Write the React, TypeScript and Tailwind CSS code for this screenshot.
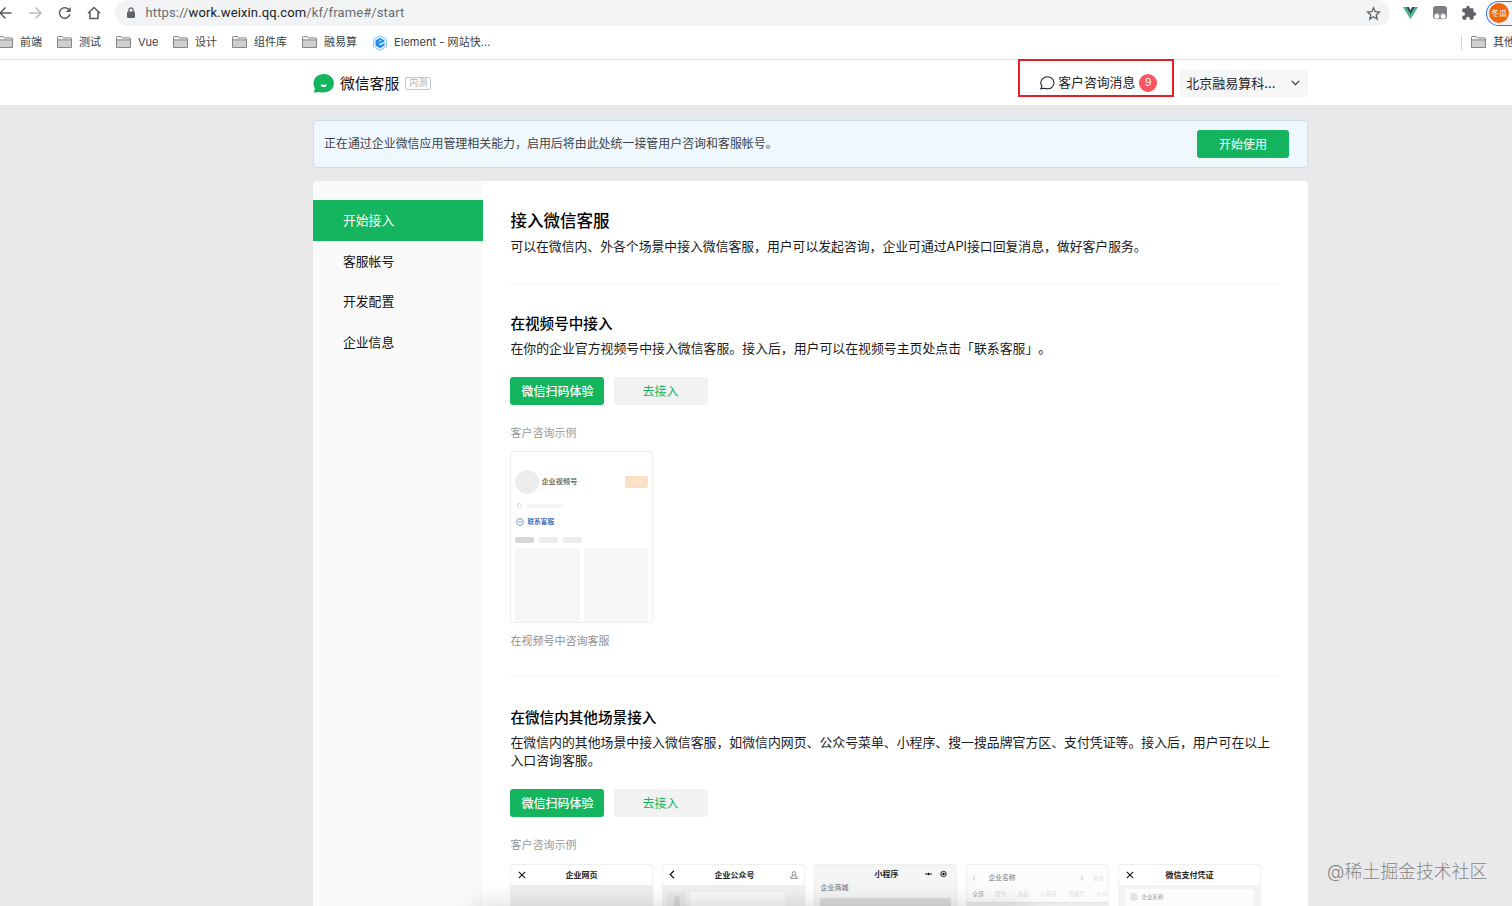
import type { ReactNode } from "react";
import clsx from "clsx";

const NAV_ITEMS = ["开始接入", "客服帐号", "开发配置", "企业信息"];

const BOOKMARKS = [
  { label: "前端", width: "w-[58px]" },
  { label: "测试", width: "w-[59px]" },
  { label: "Vue", width: "w-[57px]" },
  { label: "设计", width: "w-[59px]" },
  { label: "组件库", width: "w-[70px]" },
  { label: "融易算", width: "w-[70px]" },
];

function FolderIcon() {
  return (
    <svg className="-mt-px h-3 w-[15px] shrink-0" viewBox="0 0 15 12" fill="none" stroke="#77787a" strokeWidth=".9">
      <path d="M.5 11.500V1.300q0-.8.8-.8h3.900l1.200 1.400h7.300q.8 0 .8.800v8.800z" fill="#f3f3f3" />
      <path d="M1 4.200h13v6.800H1z" fill="#cfcfcf" stroke="none" />
      <path d="M.5 3.900h14" />
    </svg>
  );
}

function Toolbar() {
  return (
    <div className="flex h-[26px] items-center">
      <div className="flex w-[115px] shrink-0 items-center">
        <svg className="h-4 w-[115px]" viewBox="0 0 115 16" fill="none" stroke="#5a5d61" strokeWidth="1.5">
          <path d="M11.500 8H.5M5.500 2.500L0 8l5.500 5.500" />
          <path d="M29 8h11.500M35.500 2.500L41 8l-5.500 5.500" stroke="#b9bbbd" />
          <path d="M69.300 5.200A5.300 5.300 0 1 0 69.900 9.300" />
          <path d="M70.700 2v5h-5z" fill="#5a5d61" stroke="none" />
          <path d="M88 8.300l6-5.800 6 5.800M90 7.300v6.200h8V7.300" />
        </svg>
      </div>
      <div className="flex h-[26px] w-[1275px] shrink-0 items-center rounded-full bg-[#f1f3f4] pr-[9px] pl-3">
        <svg className="h-3 w-2" viewBox="0 0 8 12">
          <rect y="4.500" width="8" height="6.500" rx="1" fill="#5f6368" />
          <path d="M1.900 5V3a2.100 2.100 0 0 1 4.200 0v2" fill="none" stroke="#5f6368" strokeWidth="1.200" />
        </svg>
        <div className="ml-[10.500px] flex-1 font-[Roboto,sans-serif] text-[13px] tracking-[0.120px] text-[#6a6d71]">
          https://<span className="text-[#202124]">work.weixin.qq.com</span>/kf/frame#/start
        </div>
        <svg className="size-[15px]" viewBox="0 0 15 15" fill="none" stroke="#5f6368" strokeWidth="1.300">
          <path d="M7.500 1.800l1.700 3.900 4.200.4-3.200 2.800 1 4.200-3.700-2.300-3.700 2.300 1-4.200L1.600 6.100l4.200-.4z" />
        </svg>
      </div>
      <svg className="ml-[13px] h-3 w-[15px] shrink-0" viewBox="0 0 15 12">
        <path d="M0 0h3l4.500 7.500L12 0h3L7.500 12z" fill="#41b883" />
        <path d="M3 0h2.800l1.700 3 1.700-3H12L7.500 7.500z" fill="#34495e" />
      </svg>
      <svg className="ml-[15px] size-[14px] shrink-0" viewBox="0 0 14 14">
        <rect width="14" height="13" rx="3" fill="#7c7e81" />
        <circle cx="3.800" cy="10.300" r="2.800" fill="#fff" stroke="#8a8c8f" strokeWidth=".6" />
        <circle cx="10.200" cy="10.300" r="2.800" fill="#fff" stroke="#8a8c8f" strokeWidth=".6" />
      </svg>
      <svg className="ml-[14px] size-[16px] shrink-0" viewBox="0 0 24 24" fill="#5f6368">
        <path d="M20.500 11H19V7c0-1.100-.9-2-2-2h-4V3.500a2.500 2.500 0 0 0-5 0V5H4c-1.100 0-2 .9-2 2v3.800h1.500a2.700 2.700 0 0 1 0 5.400H2V20c0 1.100.9 2 2 2h3.800v-1.500a2.700 2.700 0 0 1 5.400 0V22H17c1.100 0 2-.9 2-2v-4h1.500a2.500 2.500 0 0 0 0-5z" />
      </svg>
      <div className="ml-[9px] flex h-[25px] w-10 shrink-0 items-center rounded-l-full border-[1.500px] border-r-0 border-[#3f76c8] bg-[#eef3fc] pl-[2px]">
        <div className="flex size-5 items-center justify-center rounded-full bg-[#ec6a0c] text-[8px] text-white">冬瓜</div>
      </div>
    </div>
  );
}

function BookmarkBar() {
  return (
    <div className="flex h-[34px] items-center border-b border-[#dcdddf] text-[11px] text-[#3c4043]">
      <div className="-ml-[2px] flex">
        {BOOKMARKS.map((b, i) => (
          <div key={b.label} className={clsx("flex shrink-0 items-center gap-[7px]", i > 0 && "pl-px", b.width)}>
            <FolderIcon />
            <span className="whitespace-nowrap">{b.label}</span>
          </div>
        ))}
      </div>
      <svg className="ml-[2px] h-4 w-[14px] shrink-0" viewBox="0 0 14 16">
        <path d="M7 .6l6.400 3.700v7.400L7 15.400.6 11.700V4.300z" fill="#eaf5ff" stroke="#6bb7fb" strokeWidth=".8" />
        <path d="M7 2.800l4.500 2.600v1.200L7 9.200v1.400l4.500-2.600v2.600L7 13.200l-4.500-2.600V5.400z" fill="#1e8cf5" />
        <path d="M5.500 6.500L9 4.800M5.500 9.500L9 7.800" stroke="#fff" strokeWidth=".7" />
      </svg>
      <span className="ml-[7px] flex-1 tracking-[0.050px]">Element - 网站快...</span>
      <div className="flex h-[15px] w-[51px] items-center gap-[7px] overflow-hidden border-l border-[#d5d6d8] pl-[9px] whitespace-nowrap">
        <FolderIcon />
        其他
      </div>
    </div>
  );
}

function AppHeader() {
  return (
    <header className="flex h-[45px] items-center bg-white pl-[313px]">
      <svg className="mt-px h-[19px] w-[21px]" viewBox="0 0 21 19">
        <path d="M10.700 0C4.900 0 .5 3.900.5 9c0 2.600.8 4.400 1.300 5.500.3 1-.4 2.500-1.500 3.800 2.600.4 4.300-.1 5-.4 1.500.5 3.300.7 5.400.7 6 0 10.200-4 10.200-9.300S16.700 0 10.700 0z" fill="#15b55f" />
        <path d="M7.500 10.200q3.200 1 6.400 0c-.3 1.900-1.600 2.900-3.200 2.900s-2.900-1-3.200-2.900z" fill="#fff" />
      </svg>
      <span className="mt-[3px] ml-[6px] text-[14.800px] text-[#111]">微信客服</span>
      <span className="mt-px ml-[6px] flex h-[13px] w-[26px] items-center justify-center rounded-[2px] border border-[#c6c6c6] text-[9px] text-[#b0b0b0]">
        内测
      </span>
      <div className="-mt-[9px] ml-[587px] flex h-[38px] w-[156px] items-center border-2 border-[#e01f26] pt-[11px] pb-px pl-[19px]">
        <svg className="size-4" viewBox="0 0 16 16" fill="none" stroke="#222" strokeWidth="1.100">
          <path d="M8.500 1.800c3.800 0 6.500 2.700 6.500 6s-2.700 6-6.500 6c-1 0-2-.2-2.800-.5l-3.900.6 1.200-2.600C2.300 10.300 1.700 9.200 1.700 7.800c0-3.300 3-6 6.800-6z" />
        </svg>
        <span className="ml-[3px] text-[12.850px] text-[#222]">客户咨询消息</span>
        <span className="ml-1 flex size-[18px] items-center justify-center rounded-full bg-[#fa5560] font-['Liberation_Sans',sans-serif] text-[11.500px] text-white">
          9
        </span>
      </div>
      <div className="mt-px ml-[6px] flex h-[27px] w-[128px] items-center justify-between rounded-[3px] bg-[#f6f6f6] pr-2 pl-[6px] text-[13px] text-[#222]">
        <span className="pt-px">北京融易算科...</span>
        <svg className="h-[6px] w-[9px]" viewBox="0 0 9 6" fill="none" stroke="#333" strokeWidth="1.200">
          <path d="M.7.800l3.800 3.800L8.300.800" />
        </svg>
      </div>
    </header>
  );
}

function Sidebar() {
  return (
    <nav className="w-[170px] shrink-0 bg-[#fafafa] pt-[19px] text-[12.800px]">
      {NAV_ITEMS.map((item, i) => (
        <div
          key={item}
          className={clsx("flex h-[40.600px] items-center pl-[30px]", i === 0 ? "bg-[#15b55f] text-white" : "pt-px text-[#111]")}
        >
          {item}
        </div>
      ))}
    </nav>
  );
}

function Actions() {
  return (
    <div className="flex gap-[10px] text-[12px]">
      <button className="h-[28px] w-[94px] rounded-[3px] bg-[#15b55f] pt-[2px] font-medium text-white">微信扫码体验</button>
      <button className="h-[28px] w-[94px] rounded-[3px] bg-[#f2f2f2] pt-[2px] pr-[2px] text-[#15b55f]">去接入</button>
    </div>
  );
}

function ChannelPreview() {
  return (
    <div className="mt-[9px] flex h-[172px] w-[143px] flex-col rounded-[3px] border border-[#efefef] px-1 pt-[18px] shadow-[0_0_2px_#00000008]">
      <div className="flex h-6 items-center">
        <div className="size-6 rounded-full bg-[#ededed]" />
        <span className="ml-[2px] flex-1 pt-px text-[7.200px] font-medium text-[#555]">企业视频号</span>
        <span className="flex h-3 w-[23px] items-center justify-center rounded-[2px] bg-[#fbdfc2] text-[5px] text-[#fff3e6]">关注</span>
      </div>
      <div className="mt-[9px] flex h-[6px] items-center gap-1 pl-[2px]">
        <span className="size-[5px] rounded-full border border-[#d5d5d5]" />
        <span className="h-1 w-[38px] rounded-full bg-[#f5f5f5]" />
      </div>
      <div className="mt-[8px] flex h-[10px] items-center gap-[3px] pl-[1px] text-[6.700px] font-bold text-[#4674bd]">
        <svg className="size-2" viewBox="0 0 8 8" fill="none" stroke="#5b84c4" strokeWidth=".8">
          <circle cx="4" cy="4" r="3.400" />
          <path d="M2.200 4h3.600" />
        </svg>
        联系客服
      </div>
      <div className="mt-[10px] flex gap-[5px]">
        <span className="h-[6px] w-[19px] rounded-[2px] bg-[#d6d8d8]" />
        <span className="h-[6px] w-[19px] rounded-[2px] bg-[#ededed]" />
        <span className="h-[6px] w-[19px] rounded-[2px] bg-[#ededed]" />
      </div>
      <div className="mt-[5px] flex flex-1 gap-1">
        <div className="flex-1 bg-[#f6f6f6]" />
        <div className="flex-1 bg-[#f6f6f6]" />
      </div>
    </div>
  );
}

function Phone({ className, children }: { className?: string; children: ReactNode }) {
  return (
    <div className={clsx("h-[172px] w-[143px] shrink-0 overflow-hidden rounded-[3px] border border-[#efefef] text-[8px] text-[#222]", className)}>
      {children}
    </div>
  );
}

function CloseIcon() {
  return (
    <svg className="size-2" viewBox="0 0 8 8" stroke="#111" strokeWidth="1.100">
      <path d="M.8.800l6.400 6.400M7.200.800L.8 7.200" />
    </svg>
  );
}

function ScenePreviews() {
  return (
    <div className="mt-[10px] flex gap-[9px]">
      <Phone className="bg-[#efefef]">
        <div className="flex h-5 items-center bg-white pl-[7px]">
          <CloseIcon />
          <span className="ml-[39px] font-bold">企业网页</span>
        </div>
      </Phone>
      <Phone className="bg-[#f1f1f1]">
        <div className="flex h-5 items-center bg-white pr-[6px] pl-[6px]">
          <svg className="h-[9px] w-[6px]" viewBox="0 0 6 9" fill="none" stroke="#111" strokeWidth="1.200">
            <path d="M5 .8L1.200 4.500 5 8.200" />
          </svg>
          <span className="ml-[39px] flex-1 font-bold">企业公众号</span>
          <svg className="size-2" viewBox="0 0 8 8" fill="none" stroke="#777" strokeWidth=".8">
            <circle cx="4" cy="2.400" r="1.800" />
            <path d="M3 4.200v.8L.6 6.200v1.200h6.800V6.200L5 5v-.8" />
          </svg>
        </div>
        <div className="flex gap-1 pt-[7px] pl-1">
          <div className="flex h-4 w-[19px] justify-center bg-[#e9e9e9] pt-1">
            <span className="h-3 w-[6px] rounded-full bg-[#d8d8d8]" />
          </div>
          <div className="h-8 w-[95px] bg-[#f9f9f9]" />
        </div>
      </Phone>
      <Phone className="bg-[#f5f5f5]">
        <div className="flex h-[19px] items-center pr-[9px] pl-[59px]">
          <span className="flex-1 font-bold">小程序</span>
          <svg className="h-2 w-[22px]" viewBox="0 0 22 8">
            <circle cx="1" cy="4" r=".8" />
            <circle cx="3.500" cy="4" r="1.200" />
            <circle cx="6" cy="4" r=".8" />
            <circle cx="18.500" cy="4" r="2.700" fill="none" stroke="#222" />
            <circle cx="18.500" cy="4" r="1.200" />
          </svg>
        </div>
        <div className="pl-[5px] text-[7px] leading-[8px] text-[#666]">企业商城</div>
        <div className="mx-[5px] mt-[6px] h-20 rounded-[2px] bg-[#dcdcdc]" />
      </Phone>
      <Phone className="bg-[#fcfcfc]">
        <div className="flex h-[26px] items-center pr-[5px] pl-[5px] text-[#c9c9c9]">
          <svg className="h-[6px] w-1" viewBox="0 0 4 6" fill="none" stroke="#bbb" strokeWidth=".8">
            <path d="M3.500.4L.8 3l2.700 2.600" />
          </svg>
          <span className="ml-3 flex-1 text-[6.800px] text-[#777]">企业名称</span>
          <svg className="mr-[9px] h-[6px] w-1" viewBox="0 0 4 6" fill="none" stroke="#ccc" strokeWidth=".8">
            <path d="M2 0v5M.4 3.500L2 5.200l1.600-1.700" />
          </svg>
          <span className="text-[5px] text-[#ddd]">取消</span>
        </div>
        <div className="flex h-[11px] items-start justify-between pr-[1px] pl-[5px] text-[5.500px] leading-[6px] text-[#dcdcdc]">
          <span className="text-[#999]">全部</span>
          <span>服务</span>
          <span>商品</span>
          <span>小程序</span>
          <span>视频号</span>
          <span>公众</span>
        </div>
        <div className="h-20 border-t border-[#e2e2e2] bg-[#ededed] px-1 pt-1">
          <div className="h-10 bg-[#f7f7f7]" />
        </div>
      </Phone>
      <Phone className="bg-[#f3f3f3]">
        <div className="flex h-5 items-center bg-white pl-[7px]">
          <CloseIcon />
          <span className="ml-[31px] font-bold">微信支付凭证</span>
        </div>
        <div className="mx-[6px] mt-1 flex h-20 items-start gap-[3px] rounded-[3px] bg-[#fcfcfc] pt-1 pl-[5px] text-[5.500px] leading-[8px] text-[#999]">
          <span className="size-2 rounded-full bg-[#e4e4e4]" />
          企业名称
        </div>
      </Phone>
    </div>
  );
}

export default function App() {
  return (
    <div className="relative flex h-[906px] w-[1512px] flex-col overflow-hidden bg-[#e9e9eb] font-[Inter,'Noto_Sans_CJK_SC',sans-serif] [text-spacing-trim:space-all]">
      <div className="shrink-0 bg-white">
        <Toolbar />
        <BookmarkBar />
        <AppHeader />
      </div>

      <div className="mt-[15px] ml-[313px] flex h-[48px] w-[995px] shrink-0 items-center justify-between rounded-[3px] border border-[#cddfeb] bg-[#eff8ff] pr-[18px] pb-px pl-[10px] text-[11.940px] text-[#3c4247]">
        正在通过企业微信应用管理相关能力，启用后将由此处统一接管用户咨询和客服帐号。
        <button className="h-[28px] w-[92px] rounded-[3px] bg-[#15b55f] pt-[2px] text-[12px] text-white">开始使用</button>
      </div>

      <div className="mt-[13px] ml-[313px] flex w-[995px] flex-1 overflow-hidden rounded-t-[4px] bg-white">
        <Sidebar />
        <main className="w-[798px] pt-[28px] pl-[27.400px] text-[12.880px] leading-[18px] text-[#1a1a1a]">
          <section className="h-[74.500px] border-b border-[#f4f4f4]">
            <h1 className="text-[16.500px] leading-6 font-medium text-black">接入微信客服</h1>
            <p className="mt-[5px] text-[12.840px]">
              可以在微信内、外各个场景中接入微信客服，用户可以发起咨询，企业可通过API接口回复消息，做好客户服务。
            </p>
          </section>

          <section className="mt-[28px] h-[365px] border-b border-[#f4f4f4]">
            <h2 className="text-[14.600px] leading-6 font-medium text-black">在视频号中接入</h2>
            <p className="mt-1 mb-[19px]">在你的企业官方视频号中接入微信客服。接入后，用户可以在视频号主页处点击「联系客服」。</p>
            <Actions />
            <p className="mt-[19px] text-[11px] text-[#9a9a9a]">客户咨询示例</p>
            <ChannelPreview />
            <p className="mt-[9px] text-[11px] text-[#8f8f8f]">在视频号中咨询客服</p>
          </section>

          <section className="mt-[29px]">
            <h2 className="text-[14.600px] leading-6 font-medium text-black">在微信内其他场景接入</h2>
            <p className="mt-1 mb-[19px]">
              在微信内的其他场景中接入微信客服，如微信内网页、公众号菜单、小程序、搜一搜品牌官方区、支付凭证等。接入后，用户可在以上入口咨询客服。
            </p>
            <Actions />
            <p className="mt-[19px] text-[11px] text-[#9a9a9a]">客户咨询示例</p>
            <ScenePreviews />
          </section>
        </main>
      </div>

      {/* soft shadow cast upwards along the bottom edge */}
      <div className="absolute top-[914px] left-[480px] h-5 w-[540px] shadow-[0_0_28px_6px_#00000030]" />
      <div className="absolute top-[859px] left-[1327px] text-[17.900px] leading-[26px] font-light whitespace-nowrap text-[#858585]">
        @稀土掘金技术社区
      </div>
    </div>
  );
}
